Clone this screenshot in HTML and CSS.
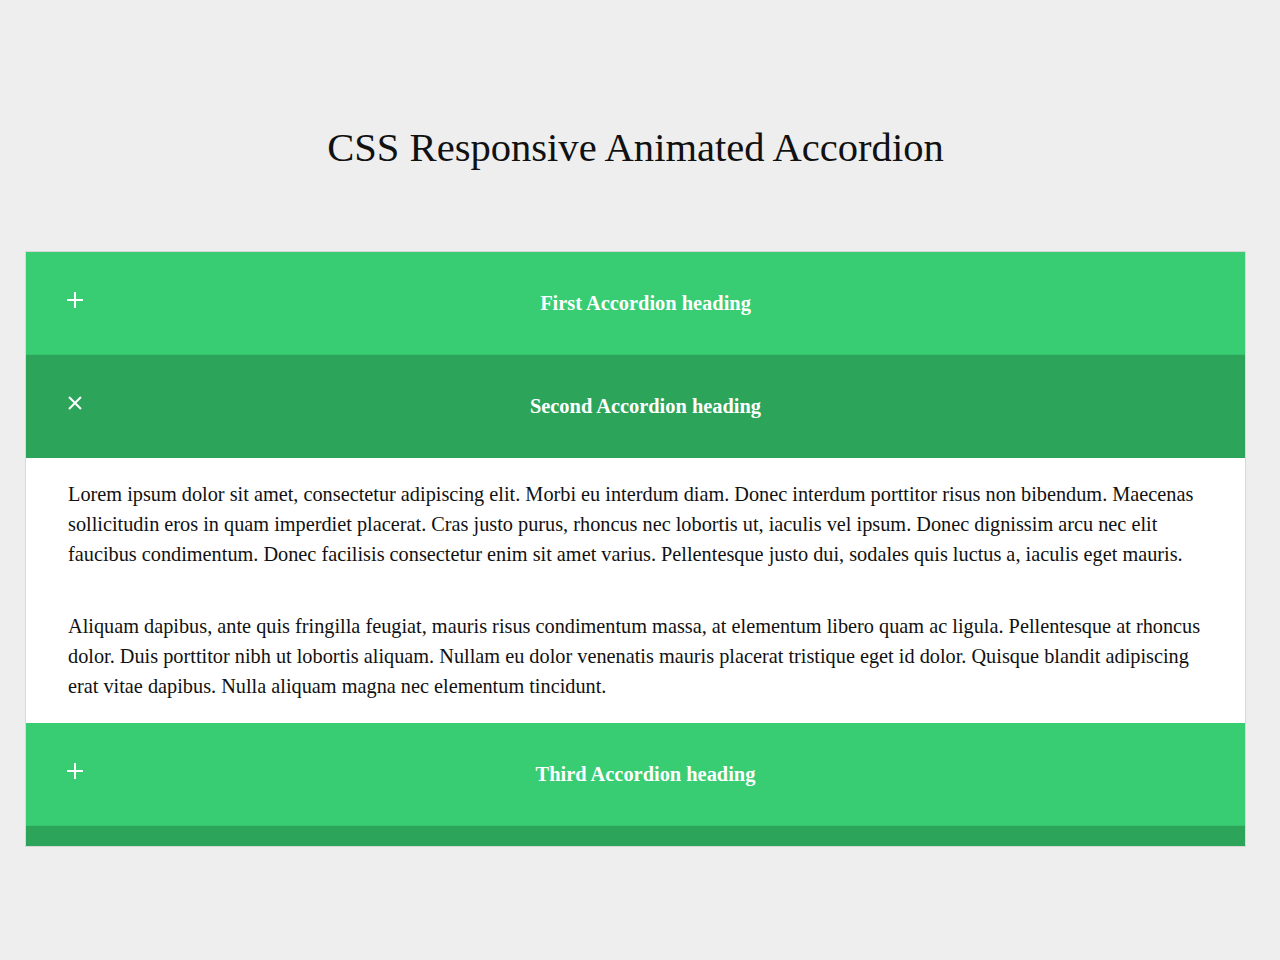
FILE: index.html
```html
<!DOCTYPE html>
<html lang="en">
<head>
    <meta charset="UTF-8">
    <meta name="viewport" content="width=device-width, initial-scale=1.0">
    <title>CSS Responsive Animated Accordion</title>
    <link rel="stylesheet" href="styles.css">
</head>
<body>
    <div class="page">
        <h1>CSS Responsive Animated Accordion</h1>

        <div class="accordion">
            <div class="tab">
                <div class="tab-label">
                    <span class="tab-icon">
                        <svg width="16" height="16" viewBox="0 0 16 16"><path d="M8 0v16M0 8h16" stroke="#fff" stroke-width="2"/></svg>
                    </span>
                    First Accordion heading
                </div>
            </div>

            <div class="tab open">
                <div class="tab-label">
                    <span class="tab-icon">
                        <svg width="16" height="16" viewBox="0 0 16 16"><path d="M2 2l12 12M14 2L2 14" stroke="#fff" stroke-width="2"/></svg>
                    </span>
                    Second Accordion heading
                </div>
                <div class="tab-content">
                    <p>Lorem ipsum dolor sit amet, consectetur adipiscing elit. Morbi eu interdum diam. Donec interdum porttitor risus non bibendum. Maecenas sollicitudin eros in quam imperdiet placerat. Cras justo purus, rhoncus nec lobortis ut, iaculis vel ipsum. Donec dignissim arcu nec elit faucibus condimentum. Donec facilisis consectetur enim sit amet varius. Pellentesque justo dui, sodales quis luctus a, iaculis eget mauris.</p>
                    <p>Aliquam dapibus, ante quis fringilla feugiat, mauris risus condimentum massa, at elementum libero quam ac ligula. Pellentesque at rhoncus dolor. Duis porttitor nibh ut lobortis aliquam. Nullam eu dolor venenatis mauris placerat tristique eget id dolor. Quisque blandit adipiscing erat vitae dapibus. Nulla aliquam magna nec elementum tincidunt.</p>
                </div>
            </div>

            <div class="tab">
                <div class="tab-label">
                    <span class="tab-icon">
                        <svg width="16" height="16" viewBox="0 0 16 16"><path d="M8 0v16M0 8h16" stroke="#fff" stroke-width="2"/></svg>
                    </span>
                    Third Accordion heading
                </div>
            </div>

            <div class="tab-footer"></div>
        </div>
    </div>
</body>
</html>
```

FILE: styles.css
```css
body {
    margin: 0;
    background-color: #eeeeee;
    font-family: "Liberation Serif", "Times New Roman", serif;
    color: #111;
}
.page {
    padding: 125px 34px 100px 25px;
}
h1 {
    margin: 0 0 80px;
    font-size: 40.6px;
    font-weight: normal;
    line-height: 46px;
    text-align: center;
}
.accordion {
    border: 1px solid #d8d8d8;
    background: white;
}
.tab-label {
    position: relative;
    height: 103px;
    padding-left: 20px;
    display: flex;
    align-items: center;
    justify-content: center;
    background-color: #38cd72;
    color: white;
    font-size: 20.4px;
    font-weight: bold;
    box-sizing: border-box;
    border-bottom: 1px solid #35c46d;
}
.tab.open .tab-label {
    background-color: #2ca55a;
    border-bottom-color: #2ca55a;
}
.tab-icon {
    position: absolute;
    left: 41px;
    top: 40px;
    width: 16px;
    height: 16px;
}
.tab-icon svg {
    display: block;
}
.tab-content {
    padding: 21px 37px 22px 42px;
    font-size: 20.3px;
    line-height: 30px;
}
.tab-content p {
    margin: 0 0 42px;
}
.tab-content p:last-child {
    margin-bottom: 0;
}
.tab-content + * {
    border-top: 1px solid #9be3b7;
}
.tab-footer {
    height: 20px;
    background-color: #2ca55a;
}
```
